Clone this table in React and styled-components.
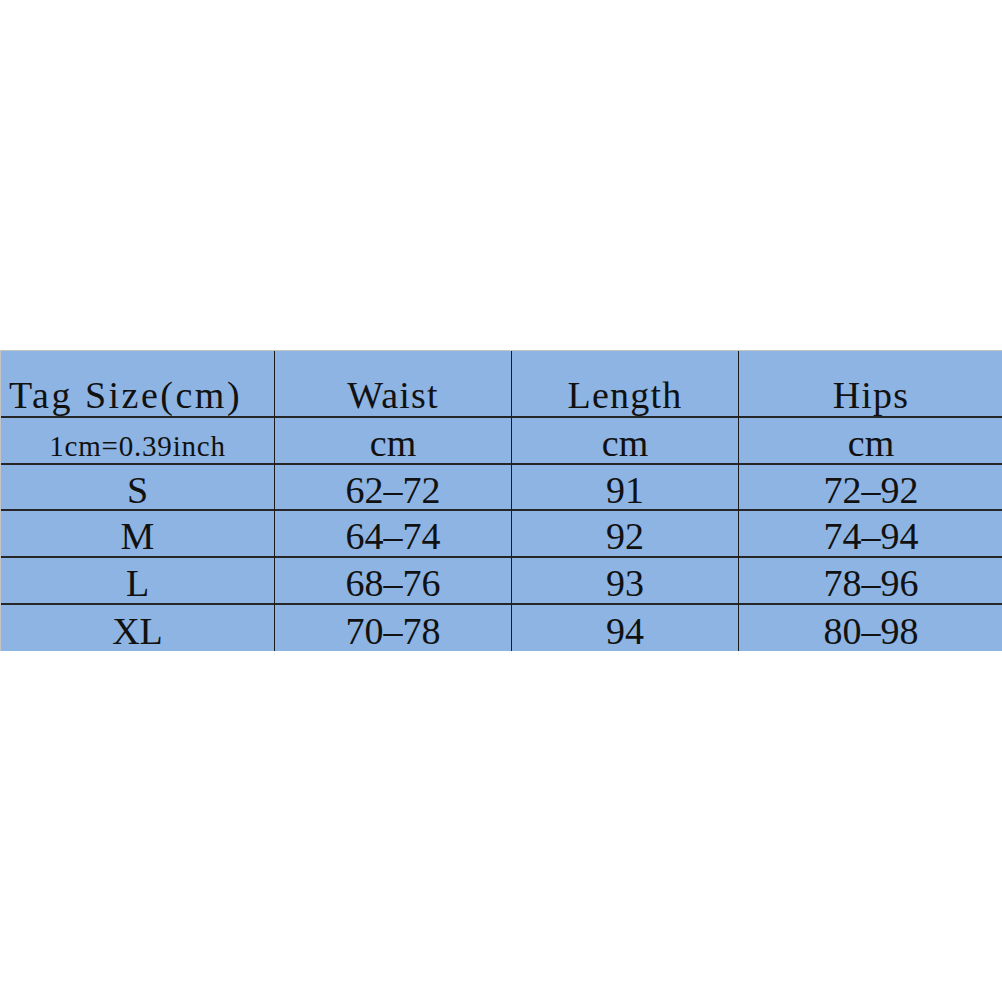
import styled, { createGlobalStyle } from 'styled-components'

const GlobalStyle = createGlobalStyle`
  html, body {
    margin: 0;
    padding: 0;
    background: #ffffff;
  }
`

const Page = styled.div`
  width: 1002px;
  height: 1002px;
  padding-top: 350px;
  box-sizing: border-box;
  background: #ffffff;
`

const Table = styled.div`
  display: grid;
  grid-template-columns: 274px 237px 227px 264px;
  grid-template-rows: 67px 47px 46px 47px 47px 46px;
  border-top: 1px solid #c4c4c4;
  border-left: 1px solid #c4c4c4;
  background: #8db4e2;
  font-family: 'Liberation Serif', 'Times New Roman', serif;
  color: #111;
`

const Cell = styled.div`
  display: flex;
  justify-content: center;
  align-items: center;
  padding-top: 5px;
  box-sizing: border-box;
  border-right: ${({ last }) => (last ? 'none' : '1px solid #1a1a1a')};
  border-bottom: ${({ lastRow }) => (lastRow ? 'none' : '2px solid #262626')};
  font-size: 38px;
  line-height: 1;
  white-space: nowrap;
`

const HeadCell = styled(Cell)`
  justify-content: ${({ left }) => (left ? 'flex-start' : 'center')};
  align-items: flex-end;
  padding-top: 0;
  padding-left: ${({ left }) => (left ? '8px' : '0')};
  padding-bottom: 2px;
  letter-spacing: ${({ left }) => (left ? '2.5px' : '1.2px')};
`

const NoteCell = styled(Cell)`
  font-size: 29px;
  letter-spacing: 0.8px;
  padding-top: 12px;
`

const rows = [
  ['S', '62-72', '91', '72-92'],
  ['M', '64-74', '92', '74-94'],
  ['L', '68-76', '93', '78-96'],
  ['XL', '70-78', '94', '80-98']
]

const App = () => {
  return (
    <Page>
      <GlobalStyle />
      <Table>
        <HeadCell left>Tag Size(cm)</HeadCell>
        <HeadCell>Waist</HeadCell>
        <HeadCell>Length</HeadCell>
        <HeadCell last>Hips</HeadCell>

        <NoteCell>1cm=0.39inch</NoteCell>
        <Cell>cm</Cell>
        <Cell>cm</Cell>
        <Cell last>cm</Cell>

        {rows.map((row, r) =>
          row.map((val, c) => (
            <Cell
              key={r + '-' + c}
              last={c === 3}
              lastRow={r === rows.length - 1}
            >
              {val.replace('-', '\u2013')}
            </Cell>
          ))
        )}
      </Table>
    </Page>
  )
}

export default App
